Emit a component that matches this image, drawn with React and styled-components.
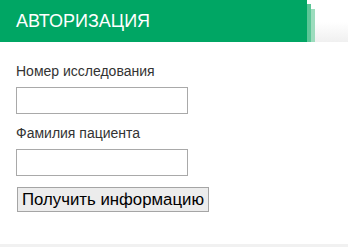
import React from "react";
import styled, { createGlobalStyle } from "styled-components";

const Global = createGlobalStyle`
  html, body { margin: 0; padding: 0; background: #fff; }
  body { font-family: "Liberation Sans", Arial, sans-serif; }
`;

const Page = styled.div`
  width: 348px;
  display: flex;
  flex-direction: column;
`;

const HeaderRow = styled.div`
  display: flex;
  height: 42px;
`;

const TitleBar = styled.div`
  width: 307px;
  height: 42px;
  background: #00a664;
  color: #fff;
  font-size: 18px;
  line-height: 42px;
  padding-left: 16px;
  box-sizing: border-box;
  flex: none;
`;

const Strip = styled.div`
  width: 4px;
  flex: none;
  margin-top: ${(p) => p.$top}px;
  background: ${(p) => p.$color};
`;

const Fade = styled.div`
  flex: 1;
  margin-top: 22px;
  background: linear-gradient(to bottom, #ffffff, #f0f0f0);
`;

const Panel = styled.form`
  display: flex;
  flex-direction: column;
  align-items: flex-start;
  padding: 22px 16px 32px 16px;
`;

const Label = styled.label`
  font-size: 14px;
  line-height: 15px;
  color: #333;
  margin-bottom: 8px;
`;

const Input = styled.input`
  width: 172px;
  height: 27px;
  box-sizing: border-box;
  border: 1px solid #a9a9a9;
  padding: 2px 4px;
  margin: 0 0 12px 0;
  font-family: "Liberation Sans", Arial, sans-serif;
  font-size: 13px;
  background: #fff;
  outline: none;
`;

const Button = styled.button`
  margin: -1px 0 0 1px;
  height: 25px;
  padding: 0 4px;
  box-sizing: border-box;
  border: 1px solid #a5a5a5;
  background: #ececec;
  color: #000;
  font-family: "Liberation Sans", Arial, sans-serif;
  font-size: 16.8px;
  line-height: 23px;
  border-radius: 0;
`;

const Bottom = styled.div`
  height: 3px;
  background: #f1f1f1;
`;

export default function App() {
  return (
    <Page>
      <Global />
      <HeaderRow>
        <TitleBar>АВТОРИЗАЦИЯ</TitleBar>
        <Strip $top={4} $color="#5cc697" />
        <Strip $top={9} $color="#9cdcbd" />
        <Fade />
      </HeaderRow>
      <Panel onSubmit={(e) => e.preventDefault()}>
        <Label>Номер исследования</Label>
        <Input type="text" />
        <Label>Фамилия пациента</Label>
        <Input type="text" />
        <Button type="submit">Получить информацию</Button>
      </Panel>
      <Bottom />
    </Page>
  );
}
